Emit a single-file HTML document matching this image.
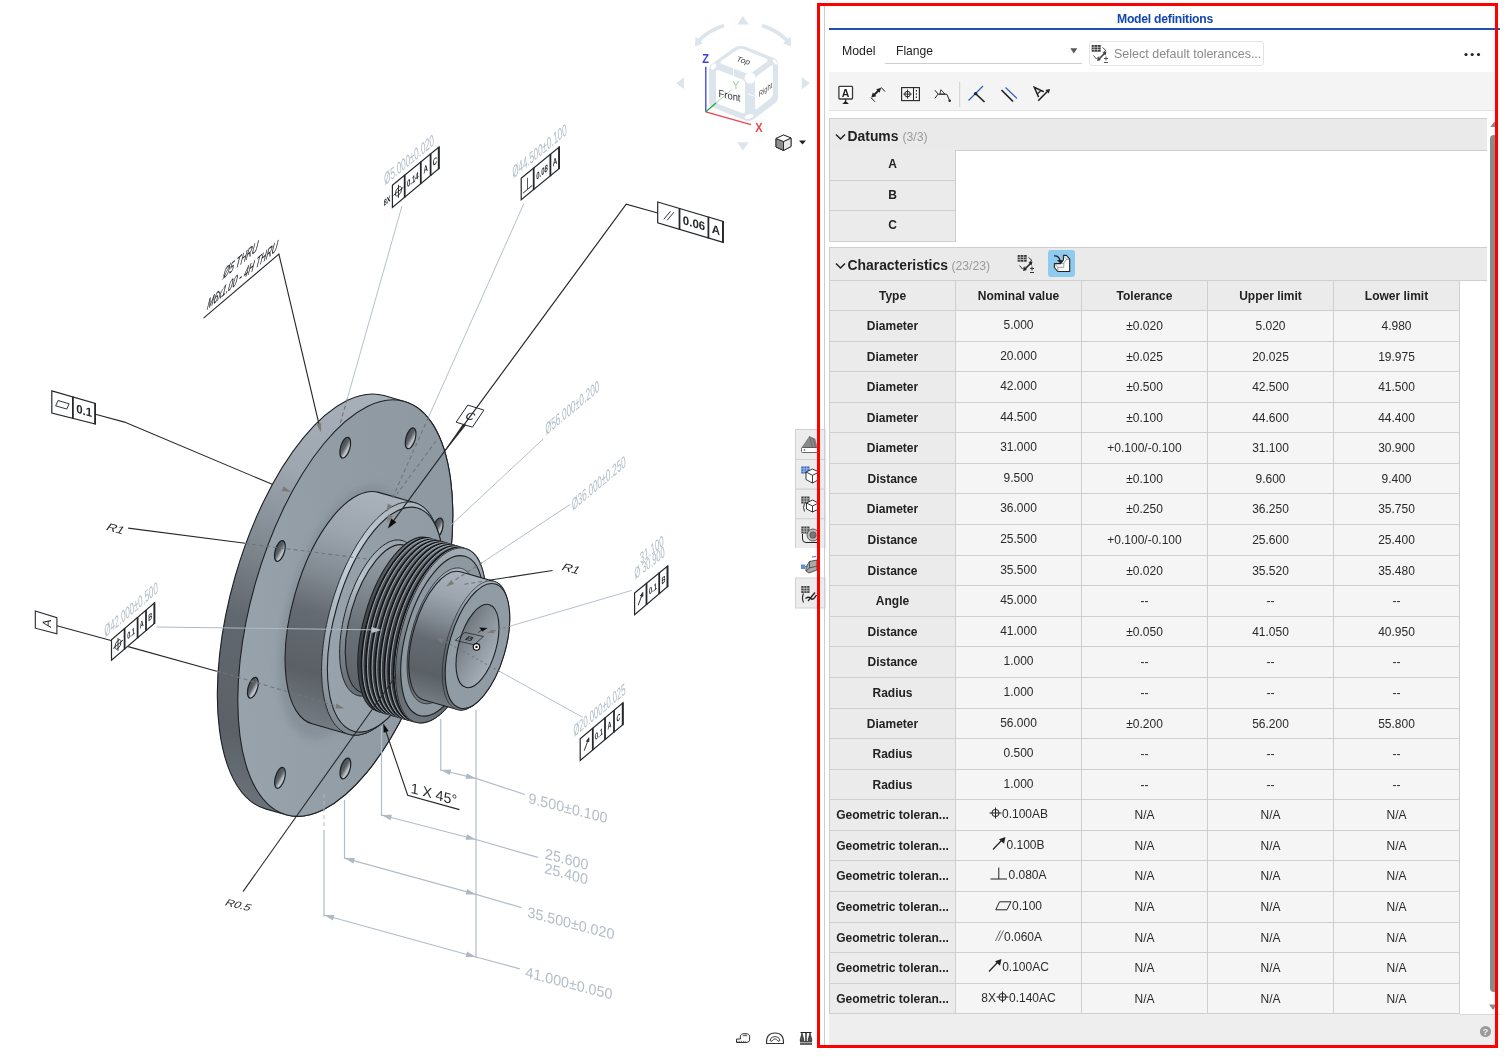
<!DOCTYPE html>
<html lang="en"><head><meta charset="utf-8"><title>Model definitions - Flange</title>
<style>
*{box-sizing:border-box;margin:0;padding:0}
html,body{width:1507px;height:1057px;overflow:hidden;background:#fff;font-family:"Liberation Sans",sans-serif;color:#222}
#stage{position:absolute;left:0;top:0;width:1507px;height:1057px;overflow:hidden;will-change:transform}
#gfx{position:absolute;left:0;top:0}
.abs{position:absolute}
#panel-left{position:absolute;left:824px;top:3px;width:1px;height:1045px;background:#c9cdd0}
#title{position:absolute;left:829.5px;top:9.5px;width:671px;height:19px;text-align:center;font-weight:bold;font-size:12.2px;line-height:19px;color:#1246b0;letter-spacing:-0.25px}
#titleline{position:absolute;left:829px;top:28px;width:671px;height:2px;background:#1c51b3}
.lbl{position:absolute;font-size:12.3px;line-height:16px;color:#222}
#modelsel{position:absolute;left:885px;top:40px;width:197px;height:24px;border-bottom:1px solid #cfcfcf}
#tolbtn{position:absolute;left:1089px;top:41px;width:175px;height:25px;border:1px solid #e3e3e3;border-radius:3px;background:#fff}
#tolbtn span{position:absolute;left:24px;top:4px;font-size:12.5px;line-height:16px;color:#8a8a8a;white-space:nowrap}
#toolbar{position:absolute;left:829px;top:72px;width:666px;height:39px;background:#f4f4f4;border-bottom:1px solid #e2e2e2}
.sec{position:absolute;left:829px;width:658px;background:#eaeaea;border:1px solid #cfcfcf;border-right:none}
.sec b{position:absolute;left:17.5px;font-size:13.9px;line-height:18px;color:#222;white-space:nowrap}
.sec i{position:absolute;font-style:normal;font-size:12.2px;line-height:16px;color:#9a9a9a}
.dat{position:absolute;left:829px;width:127px;height:31px;background:#ebebeb;border:1px solid #cfcfcf;border-top:none;text-align:center;font-weight:bold;font-size:12px;line-height:29px}
.tbl{position:absolute;left:829px;top:280px;width:631px;border-left:1px solid #cfcfcf}
.tr{display:flex;height:30.58px}
.tr.th{height:31px}
.td{width:126px;flex:none;border-right:1px solid #cfcfcf;border-bottom:1px solid #cfcfcf;background:#f5f5f5;text-align:center;font-size:12px;line-height:30px;white-space:nowrap;overflow:hidden;color:#2a2a2a}
.td.h{background:#ebebeb;font-weight:bold;color:#222}
.td.nv{line-height:28px}
.tr.th .td{border-top:1px solid #cfcfcf}
.gs{vertical-align:-1px;display:inline-block}
#footer{position:absolute;left:829px;top:1014px;width:666px;height:31px;background:#eeeeee}
#sbar{position:absolute;left:1490px;top:118px;width:8px;height:896px;background:#fff}
#sthumb{position:absolute;left:1490px;top:135px;width:8px;height:857px;background:#8a8a8a;border-radius:4px}
#redbox{position:absolute;left:816.6px;top:3.2px;width:681.6px;height:1045px;border:3px solid #ff0000;pointer-events:none}
.sbtn{position:absolute;left:795px;width:30px;height:30px;background:#ececec;border:1px solid #d4d4d4}
</style></head><body><div id="stage">
<svg id="gfx" width="830" height="1057" viewBox="0 0 830 1057" font-family="Liberation Sans, sans-serif">
<defs>
<linearGradient id="gs" x1="0" y1="0" x2="0" y2="1"><stop offset="0" stop-color="#aab3bc"/><stop offset="0.2" stop-color="#9ca5ae"/><stop offset="0.4" stop-color="#7f878f"/><stop offset="0.55" stop-color="#656b72"/><stop offset="0.8" stop-color="#5a6066"/><stop offset="1" stop-color="#747b82"/></linearGradient>
<linearGradient id="grim" x1="0" y1="0" x2="0" y2="1"><stop offset="0" stop-color="#a8b1ba"/><stop offset="0.22" stop-color="#9ea7b0"/><stop offset="0.42" stop-color="#7e868e"/><stop offset="0.58" stop-color="#62686f"/><stop offset="0.85" stop-color="#5b6167"/><stop offset="1" stop-color="#6b7279"/></linearGradient>
<linearGradient id="gthr" x1="0" y1="0" x2="0" y2="1"><stop offset="0" stop-color="#7d858c"/><stop offset="0.15" stop-color="#5d6368"/><stop offset="0.45" stop-color="#474b50"/><stop offset="0.8" stop-color="#383c40"/><stop offset="1" stop-color="#484c51"/></linearGradient>
<linearGradient id="gcham" x1="0" y1="0" x2="0" y2="1"><stop offset="0" stop-color="#a9b3bc"/><stop offset="0.3" stop-color="#c6d1da"/><stop offset="0.55" stop-color="#aab4bd"/><stop offset="1" stop-color="#7d858d"/></linearGradient>
<linearGradient id="gneck" x1="0" y1="0" x2="0" y2="1"><stop offset="0" stop-color="#9aa3ab"/><stop offset="0.3" stop-color="#848c94"/><stop offset="0.6" stop-color="#6a7178"/><stop offset="1" stop-color="#5d6369"/></linearGradient>
<linearGradient id="gface" x1="1" y1="0" x2="0" y2="1"><stop offset="0" stop-color="#8d97a0"/><stop offset="0.5" stop-color="#929ca5"/><stop offset="1" stop-color="#9ba5ae"/></linearGradient>
<linearGradient id="gbore" x1="0" y1="0" x2="1" y2="0.6"><stop offset="0" stop-color="#676e75"/><stop offset="0.45" stop-color="#848c94"/><stop offset="1" stop-color="#a5aeb7"/></linearGradient>
<linearGradient id="ghole" x1="0" y1="0.2" x2="1" y2="0.8"><stop offset="0" stop-color="#41464b"/><stop offset="0.45" stop-color="#5d6369"/><stop offset="0.75" stop-color="#c3cbd2"/><stop offset="1" stop-color="#70777e"/></linearGradient>
<linearGradient id="gs2" x1="0" y1="0" x2="0" y2="1"><stop offset="0" stop-color="#a3acb5"/><stop offset="0.3" stop-color="#939ca5"/><stop offset="0.55" stop-color="#7b838b"/><stop offset="0.8" stop-color="#60666c"/><stop offset="1" stop-color="#70777e"/></linearGradient>
<linearGradient id="gcham2" x1="0" y1="0" x2="0" y2="1"><stop offset="0" stop-color="#98a1aa"/><stop offset="0.3" stop-color="#b9c4cd"/><stop offset="0.55" stop-color="#8d969e"/><stop offset="1" stop-color="#666c73"/></linearGradient>
<linearGradient id="gface2" x1="1" y1="0" x2="0" y2="1"><stop offset="0" stop-color="#8f99a2"/><stop offset="0.5" stop-color="#949ea7"/><stop offset="1" stop-color="#9aa4ad"/></linearGradient>
<filter id="bl" x="-20%" y="-20%" width="140%" height="140%"><feGaussianBlur stdDeviation="3.5"/></filter>
</defs>
<g transform="translate(477.5 646.0) rotate(16.0)">
<path d="M-158.83 -215.00A93.31 215.00 0 0 0 -158.83 215.00L-137.52 215.00A93.31 215.00 0 0 0 -137.52 -215.00Z" fill="url(#grim)" stroke="#1d2124" stroke-width="1.1" />
<ellipse cx="-137.52" cy="0" rx="93.31" ry="215.00" fill="url(#gface)" stroke="#1d2124" stroke-width="1.1" />
<ellipse cx="-121.53" cy="-181.19" rx="4.67" ry="10.75" fill="url(#ghole)" stroke="#1d2124" stroke-width="1.2"/>
<ellipse cx="-70.61" cy="-102.05" rx="4.67" ry="10.75" fill="url(#ghole)" stroke="#1d2124" stroke-width="1.2"/>
<ellipse cx="-58.89" cy="36.86" rx="4.67" ry="10.75" fill="url(#ghole)" stroke="#1d2124" stroke-width="1.2"/>
<ellipse cx="-93.23" cy="154.19" rx="4.67" ry="10.75" fill="url(#ghole)" stroke="#1d2124" stroke-width="1.2"/>
<ellipse cx="-153.52" cy="181.19" rx="4.67" ry="10.75" fill="url(#ghole)" stroke="#1d2124" stroke-width="1.2"/>
<ellipse cx="-204.44" cy="102.05" rx="4.67" ry="10.75" fill="url(#ghole)" stroke="#1d2124" stroke-width="1.2"/>
<ellipse cx="-216.16" cy="-36.86" rx="4.67" ry="10.75" fill="url(#ghole)" stroke="#1d2124" stroke-width="1.2"/>
<ellipse cx="-181.82" cy="-154.19" rx="4.67" ry="10.75" fill="url(#ghole)" stroke="#1d2124" stroke-width="1.2"/>
<ellipse cx="-137.52" cy="4" rx="56.92" ry="131.15" fill="#7d868e" opacity="0.55" filter="url(#bl)"/>
<path d="M-137.52 -120.40A52.25 120.40 0 0 0 -137.52 120.40L-99.56 120.40A52.25 120.40 0 0 0 -99.56 -120.40Z" fill="url(#gs)" stroke="#1d2124" stroke-width="1.1" />
<path d="M-151.8 0.0L-151.8 -4.2L-151.7 -8.4L-151.5 -12.6L-151.3 -16.8L-151.0 -20.9L-150.7 -25.0L-150.3 -29.1L-149.8 -33.2L-149.3 -37.2L-148.7 -41.2L-148.0 -45.1L-147.3 -49.0L-146.5 -52.8L-145.7 -56.5L-144.8 -60.2L-143.9 -63.8L-142.9 -67.3L-141.8 -70.8L-140.7 -74.1L-139.6 -77.4L-138.4 -80.6L-137.2 -83.6L-135.9 -86.6L-134.5 -89.5L-133.2 -92.2L-131.7 -94.9L-130.3 -97.4L-128.8 -99.8L-127.2 -102.1L-125.7 -104.3L-124.1 -106.3L-122.5 -108.2L-120.8 -110.0L-119.1 -111.6L-117.4 -113.1L-115.7 -114.5L-114.0 -115.7L-112.2 -116.8L-110.4 -117.8L-108.6 -118.6L-106.8 -119.2L-105.0 -119.7L-103.2 -120.1L-101.4 -120.3L-99.6 -120.4L-97.7 -120.3L-95.9 -120.1L-94.1 -119.7L-92.3 -119.2L-90.5 -118.6L-88.7 -117.8L-86.9 -116.8L-85.2 -115.7L-83.4 -114.5L-81.7 -113.1L-80.0 -111.6L-78.3 -110.0L-76.7 -108.2L-75.0 -106.3L-72.0 -102.5L-70.5 -100.5L-69.0 -98.5L-67.5 -96.2L-66.1 -93.9L-64.7 -91.5L-63.3 -88.9L-62.0 -86.3L-60.7 -83.5L-59.4 -80.7L-58.2 -77.7L-57.1 -74.6L-56.0 -71.5L-54.9 -68.2L-53.9 -64.9L-53.0 -61.5L-52.0 -58.0L-51.2 -54.5L-50.4 -50.9L-49.6 -47.2L-49.0 -43.5L-48.3 -39.7L-47.8 -35.9L-47.2 -32.0L-46.8 -28.1L-46.4 -24.1L-46.1 -20.2L-45.8 -16.2L-45.6 -12.1L-45.4 -8.1L-45.3 -4.0L-45.3 0.0L-45.3 4.0L-45.4 8.1L-45.6 12.1L-45.8 16.2L-46.1 20.2L-46.4 24.1L-46.8 28.1L-47.2 32.0L-47.8 35.9L-48.3 39.7L-49.0 43.5L-49.6 47.2L-50.4 50.9L-51.2 54.5L-52.0 58.0L-53.0 61.5L-53.9 64.9L-54.9 68.2L-56.0 71.5L-57.1 74.6L-58.2 77.7L-59.4 80.7L-60.7 83.5L-62.0 86.3L-63.3 88.9L-64.7 91.5L-66.1 93.9L-67.5 96.2L-69.0 98.5L-70.5 100.5L-72.0 102.5L-75.0 106.3L-76.7 108.2L-78.3 110.0L-80.0 111.6L-81.7 113.1L-83.4 114.5L-85.2 115.7L-86.9 116.8L-88.7 117.8L-90.5 118.6L-92.3 119.2L-94.1 119.7L-95.9 120.1L-97.7 120.3L-99.6 120.4L-101.4 120.3L-103.2 120.1L-105.0 119.7L-106.8 119.2L-108.6 118.6L-110.4 117.8L-112.2 116.8L-114.0 115.7L-115.7 114.5L-117.4 113.1L-119.1 111.6L-120.8 110.0L-122.5 108.2L-124.1 106.3L-125.7 104.3L-127.2 102.1L-128.8 99.8L-130.3 97.4L-131.7 94.9L-133.2 92.2L-134.5 89.5L-135.9 86.6L-137.2 83.6L-138.4 80.6L-139.6 77.4L-140.7 74.1L-141.8 70.8L-142.9 67.3L-143.9 63.8L-144.8 60.2L-145.7 56.5L-146.5 52.8L-147.3 49.0L-148.0 45.1L-148.7 41.2L-149.3 37.2L-149.8 33.2L-150.3 29.1L-150.7 25.0L-151.0 20.9L-151.3 16.8L-151.5 12.6L-151.7 8.4L-151.8 4.2Z" fill="url(#gcham)" stroke="#1d2124" stroke-width="0.8" />
<ellipse cx="-95.69" cy="0" rx="50.39" ry="116.10" fill="url(#gface2)" stroke="#1d2124" stroke-width="1.1" />
<path d="M-136.5 0.0L-136.5 -2.8L-136.4 -5.6L-136.3 -8.4L-136.2 -11.2L-136.0 -14.0L-135.7 -16.8L-135.4 -19.5L-135.1 -22.2L-134.8 -24.9L-134.4 -27.6L-133.9 -30.2L-133.5 -32.8L-132.9 -35.3L-132.4 -37.9L-131.8 -40.3L-131.2 -42.7L-130.5 -45.1L-129.8 -47.4L-129.1 -49.6L-128.3 -51.8L-127.5 -54.0L-126.7 -56.0L-125.8 -58.0L-124.9 -59.9L-124.0 -61.8L-123.0 -63.5L-122.1 -65.2L-121.1 -66.8L-120.0 -68.4L-119.0 -69.8L-117.9 -71.2L-116.8 -72.5L-115.7 -73.7L-114.6 -74.8L-113.5 -75.8L-112.3 -76.7L-111.1 -77.5L-110.0 -78.2L-108.8 -78.9L-107.6 -79.4L-106.4 -79.8L-105.2 -80.2L-103.9 -80.4L-102.7 -80.6L-101.5 -80.6L-100.3 -80.6L-99.1 -80.4L-97.8 -80.2L-96.6 -79.8L-95.4 -79.4L-94.2 -78.9L-93.0 -78.2L-91.8 -77.5L-90.7 -76.7L-89.5 -75.8L-88.4 -74.8L-87.3 -73.7L-86.2 -72.5L-83.0 -69.0L-82.0 -67.8L-81.0 -66.5L-80.0 -65.1L-79.0 -63.6L-78.0 -62.1L-77.1 -60.5L-76.2 -58.8L-75.3 -57.0L-74.5 -55.2L-73.7 -53.3L-72.9 -51.4L-72.1 -49.3L-71.4 -47.3L-70.7 -45.1L-70.0 -42.9L-69.4 -40.7L-68.8 -38.4L-68.2 -36.0L-67.7 -33.6L-67.2 -31.2L-66.7 -28.8L-66.3 -26.2L-65.9 -23.7L-65.6 -21.2L-65.3 -18.6L-65.0 -16.0L-64.8 -13.3L-64.6 -10.7L-64.5 -8.0L-64.4 -5.3L-64.3 -2.7L-64.3 0.0L-64.3 2.7L-64.4 5.3L-64.5 8.0L-64.6 10.7L-64.8 13.3L-65.0 16.0L-65.3 18.6L-65.6 21.2L-65.9 23.7L-66.3 26.2L-66.7 28.8L-67.2 31.2L-67.7 33.6L-68.2 36.0L-68.8 38.4L-69.4 40.7L-70.0 42.9L-70.7 45.1L-71.4 47.3L-72.1 49.3L-72.9 51.4L-73.7 53.3L-74.5 55.2L-75.3 57.0L-76.2 58.8L-77.1 60.5L-78.0 62.1L-79.0 63.6L-80.0 65.1L-81.0 66.5L-82.0 67.8L-83.0 69.0L-86.2 72.5L-87.3 73.7L-88.4 74.8L-89.5 75.8L-90.7 76.7L-91.8 77.5L-93.0 78.2L-94.2 78.9L-95.4 79.4L-96.6 79.8L-97.8 80.2L-99.1 80.4L-100.3 80.6L-101.5 80.6L-102.7 80.6L-103.9 80.4L-105.2 80.2L-106.4 79.8L-107.6 79.4L-108.8 78.9L-110.0 78.2L-111.1 77.5L-112.3 76.7L-113.5 75.8L-114.6 74.8L-115.7 73.7L-116.8 72.5L-117.9 71.2L-119.0 69.8L-120.0 68.4L-121.1 66.8L-122.1 65.2L-123.0 63.5L-124.0 61.8L-124.9 59.9L-125.8 58.0L-126.7 56.0L-127.5 54.0L-128.3 51.8L-129.1 49.6L-129.8 47.4L-130.5 45.1L-131.2 42.7L-131.8 40.3L-132.4 37.9L-132.9 35.3L-133.5 32.8L-133.9 30.2L-134.4 27.6L-134.8 24.9L-135.1 22.2L-135.4 19.5L-135.7 16.8L-136.0 14.0L-136.2 11.2L-136.3 8.4L-136.4 5.6L-136.5 2.8Z" fill="url(#gcham2)" stroke="#1d2124" stroke-width="0.9" />
<path d="M-97.62 -76.76A33.31 76.76 0 0 0 -97.62 76.76L-77.48 76.76A33.31 76.76 0 0 0 -77.48 -76.76Z" fill="url(#gneck)" stroke="#1d2124" stroke-width="1.1" />
<path d="M-77.48 -90.30A39.19 90.30 0 0 0 -77.48 90.30L-38.35 90.30A39.19 90.30 0 0 0 -38.35 -90.30Z" fill="url(#gthr)" stroke="#1d2124" stroke-width="1.1" />
<path d="M-73.60 -90.30A39.19 90.30 0 0 0 -73.60 90.30" fill="none" stroke="#14171a" stroke-width="1.7" />
<path d="M-72.21 -90.30A39.19 90.30 0 0 0 -72.21 90.30" fill="none" stroke="#9fa9b2" stroke-width="0.9" />
<path d="M-68.82 -90.30A39.19 90.30 0 0 0 -68.82 90.30" fill="none" stroke="#14171a" stroke-width="1.7" />
<path d="M-67.43 -90.30A39.19 90.30 0 0 0 -67.43 90.30" fill="none" stroke="#9fa9b2" stroke-width="0.9" />
<path d="M-64.04 -90.30A39.19 90.30 0 0 0 -64.04 90.30" fill="none" stroke="#14171a" stroke-width="1.7" />
<path d="M-62.64 -90.30A39.19 90.30 0 0 0 -62.64 90.30" fill="none" stroke="#9fa9b2" stroke-width="0.9" />
<path d="M-59.25 -90.30A39.19 90.30 0 0 0 -59.25 90.30" fill="none" stroke="#14171a" stroke-width="1.7" />
<path d="M-57.86 -90.30A39.19 90.30 0 0 0 -57.86 90.30" fill="none" stroke="#9fa9b2" stroke-width="0.9" />
<path d="M-54.47 -90.30A39.19 90.30 0 0 0 -54.47 90.30" fill="none" stroke="#14171a" stroke-width="1.7" />
<path d="M-53.07 -90.30A39.19 90.30 0 0 0 -53.07 90.30" fill="none" stroke="#9fa9b2" stroke-width="0.9" />
<path d="M-49.68 -90.30A39.19 90.30 0 0 0 -49.68 90.30" fill="none" stroke="#14171a" stroke-width="1.7" />
<path d="M-48.29 -90.30A39.19 90.30 0 0 0 -48.29 90.30" fill="none" stroke="#9fa9b2" stroke-width="0.9" />
<path d="M-44.90 -90.30A39.19 90.30 0 0 0 -44.90 90.30" fill="none" stroke="#14171a" stroke-width="1.7" />
<path d="M-43.50 -90.30A39.19 90.30 0 0 0 -43.50 90.30" fill="none" stroke="#9fa9b2" stroke-width="0.9" />
<path d="M-40.11 -90.30A39.19 90.30 0 0 0 -40.11 90.30" fill="none" stroke="#14171a" stroke-width="1.7" />
<path d="M-38.72 -90.30A39.19 90.30 0 0 0 -38.72 90.30" fill="none" stroke="#9fa9b2" stroke-width="0.9" />
<path d="M-77.5 0.0L-77.5 -3.1L-77.5 -6.3L-77.3 -9.4L-77.2 -12.6L-77.0 -15.7L-76.7 -18.8L-76.4 -21.9L-76.0 -24.9L-75.6 -27.9L-75.2 -30.9L-74.7 -33.8L-74.2 -36.7L-73.6 -39.6L-73.0 -42.4L-72.3 -45.1L-71.6 -47.9L-70.8 -50.5L-70.1 -53.1L-69.2 -55.6L-68.4 -58.0L-67.5 -60.4L-66.5 -62.7L-65.6 -65.0L-64.6 -67.1L-63.5 -69.2L-62.5 -71.2L-61.4 -73.0L-60.3 -74.9L-59.1 -76.6L-58.0 -78.2L-56.8 -79.7L-55.5 -81.2L-54.3 -82.5L-53.0 -83.7L-51.8 -84.8L-50.5 -85.9L-49.1 -86.8L-47.8 -87.6L-46.5 -88.3L-45.2 -88.9L-43.8 -89.4L-42.5 -89.8L-41.1 -90.1L-39.7 -90.2L-38.4 -90.3L-37.0 -90.2L-35.6 -90.1L-34.3 -89.8L-32.9 -89.4L-31.6 -88.9L-30.2 -88.3L-28.9 -87.6L-27.6 -86.8L-26.2 -85.9L-24.9 -84.8L-23.7 -83.7L-22.4 -82.5L-21.2 -81.2L-19.9 -79.7L-18.8 -78.2L-17.6 -76.6L-16.4 -74.9L-15.3 -73.0L-14.2 -71.2L-13.2 -69.2L-12.1 -67.1L-11.1 -65.0L-10.2 -62.7L-9.2 -60.4L-8.3 -58.0L-7.5 -55.6L-6.7 -53.1L-5.9 -50.5L-5.1 -47.9L-4.4 -45.1L-3.8 -42.4L-3.1 -39.6L-2.5 -36.7L-2.0 -33.8L-1.5 -30.9L-1.1 -27.9L-0.7 -24.9L-0.3 -21.9L-0.0 -18.8L0.2 -15.7L0.5 -12.6L0.6 -9.4L0.7 -6.3L0.8 -3.1L0.8 0.0L0.8 3.1L0.7 6.3L0.6 9.4L0.5 12.6L0.2 15.7L-0.0 18.8L-0.3 21.9L-0.7 24.9L-1.1 27.9L-1.5 30.9L-2.0 33.8L-2.5 36.7L-3.1 39.6L-3.8 42.4L-4.4 45.1L-5.1 47.9L-5.9 50.5L-6.7 53.1L-7.5 55.6L-8.3 58.0L-9.2 60.4L-10.2 62.7L-11.1 65.0L-12.1 67.1L-13.2 69.2L-14.2 71.2L-15.3 73.0L-16.4 74.9L-17.6 76.6L-18.8 78.2L-19.9 79.7L-21.2 81.2L-22.4 82.5L-23.7 83.7L-24.9 84.8L-26.2 85.9L-27.6 86.8L-28.9 87.6L-30.2 88.3L-31.6 88.9L-32.9 89.4L-34.3 89.8L-35.6 90.1L-37.0 90.2L-38.4 90.3L-39.7 90.2L-41.1 90.1L-42.5 89.8L-43.8 89.4L-45.2 88.9L-46.5 88.3L-47.8 87.6L-49.1 86.8L-50.5 85.9L-51.8 84.8L-53.0 83.7L-54.3 82.5L-55.5 81.2L-56.8 79.7L-58.0 78.2L-59.1 76.6L-60.3 74.9L-61.4 73.0L-62.5 71.2L-63.5 69.2L-64.6 67.1L-65.6 65.0L-66.5 62.7L-67.5 60.4L-68.4 58.0L-69.2 55.6L-70.1 53.1L-70.8 50.5L-71.6 47.9L-72.3 45.1L-73.0 42.4L-73.6 39.6L-74.2 36.7L-74.7 33.8L-75.2 30.9L-75.6 27.9L-76.0 24.9L-76.4 21.9L-76.7 18.8L-77.0 15.7L-77.2 12.6L-77.3 9.4L-77.5 6.3L-77.5 3.1Z" fill="url(#gs2)" stroke="#1d2124" stroke-width="0.8" />
<ellipse cx="-36.80" cy="0" rx="35.92" ry="82.77" fill="#8e98a1" stroke="#1d2124" stroke-width="1.1" />
<path d="M-67.2 0.0L-67.2 -2.5L-67.2 -4.9L-67.0 -7.3L-66.9 -9.8L-66.8 -12.2L-66.6 -14.6L-66.3 -17.0L-66.0 -19.3L-65.7 -21.7L-65.4 -24.0L-65.0 -26.3L-64.6 -28.5L-64.1 -30.7L-63.7 -32.9L-63.1 -35.0L-62.6 -37.1L-62.0 -39.2L-61.4 -41.2L-60.8 -43.1L-60.1 -45.0L-59.4 -46.9L-58.7 -48.7L-57.9 -50.4L-57.2 -52.1L-56.4 -53.7L-55.5 -55.2L-54.7 -56.7L-53.8 -58.1L-52.9 -59.4L-52.0 -60.7L-51.1 -61.9L-50.1 -63.0L-49.2 -64.0L-48.2 -65.0L-47.2 -65.9L-46.2 -66.7L-45.2 -67.4L-44.2 -68.0L-43.1 -68.6L-42.1 -69.0L-41.0 -69.4L-40.0 -69.7L-38.9 -69.9L-37.9 -70.0L-36.8 -70.1L-35.7 -70.0L-34.7 -69.9L-33.6 -69.7L-32.6 -69.4L-31.5 -69.0L-30.5 -68.6L-29.4 -68.0L-28.4 -67.4L-27.4 -66.7L-26.4 -65.9L-25.4 -65.0L-24.4 -64.0L-23.5 -63.0L-22.5 -61.9L-20.1 -58.9L-19.2 -57.7L-18.4 -56.5L-17.5 -55.3L-16.7 -53.9L-15.9 -52.5L-15.1 -51.1L-14.3 -49.5L-13.6 -47.9L-12.9 -46.3L-12.2 -44.6L-11.5 -42.8L-10.9 -41.0L-10.3 -39.2L-9.7 -37.3L-9.2 -35.3L-8.7 -33.3L-8.2 -31.3L-7.7 -29.2L-7.3 -27.1L-6.9 -25.0L-6.5 -22.8L-6.2 -20.6L-5.9 -18.4L-5.6 -16.1L-5.4 -13.9L-5.2 -11.6L-5.1 -9.3L-4.9 -7.0L-4.8 -4.7L-4.8 -2.3L-4.8 0.0L-4.8 2.3L-4.8 4.7L-4.9 7.0L-5.1 9.3L-5.2 11.6L-5.4 13.9L-5.6 16.1L-5.9 18.4L-6.2 20.6L-6.5 22.8L-6.9 25.0L-7.3 27.1L-7.7 29.2L-8.2 31.3L-8.7 33.3L-9.2 35.3L-9.7 37.3L-10.3 39.2L-10.9 41.0L-11.5 42.8L-12.2 44.6L-12.9 46.3L-13.6 47.9L-14.3 49.5L-15.1 51.1L-15.9 52.5L-16.7 53.9L-17.5 55.3L-18.4 56.5L-19.2 57.7L-20.1 58.9L-22.5 61.9L-23.5 63.0L-24.4 64.0L-25.4 65.0L-26.4 65.9L-27.4 66.7L-28.4 67.4L-29.4 68.0L-30.5 68.6L-31.5 69.0L-32.6 69.4L-33.6 69.7L-34.7 69.9L-35.7 70.0L-36.8 70.1L-37.9 70.0L-38.9 69.9L-40.0 69.7L-41.0 69.4L-42.1 69.0L-43.1 68.6L-44.2 68.0L-45.2 67.4L-46.2 66.7L-47.2 65.9L-48.2 65.0L-49.2 64.0L-50.1 63.0L-51.1 61.9L-52.0 60.7L-52.9 59.4L-53.8 58.1L-54.7 56.7L-55.5 55.2L-56.4 53.7L-57.2 52.1L-57.9 50.4L-58.7 48.7L-59.4 46.9L-60.1 45.0L-60.8 43.1L-61.4 41.2L-62.0 39.2L-62.6 37.1L-63.1 35.0L-63.7 32.9L-64.1 30.7L-64.6 28.5L-65.0 26.3L-65.4 24.0L-65.7 21.7L-66.0 19.3L-66.3 17.0L-66.6 14.6L-66.8 12.2L-66.9 9.8L-67.0 7.3L-67.2 4.9L-67.2 2.5Z" fill="url(#gs)" stroke="#1d2124" stroke-width="0.7" />
<path d="M-36.80 -66.65A28.93 66.65 0 0 0 -36.80 66.65L-1.94 66.65A28.93 66.65 0 0 0 -1.94 -66.65Z" fill="url(#gs)" stroke="#1d2124" stroke-width="1.1" />
<path d="M-30.9 0.0L-30.9 -2.3L-30.8 -4.7L-30.7 -7.0L-30.6 -9.3L-30.4 -11.6L-30.2 -13.9L-30.0 -16.1L-29.7 -18.4L-29.4 -20.6L-29.1 -22.8L-28.8 -25.0L-28.4 -27.1L-27.9 -29.2L-27.5 -31.3L-27.0 -33.3L-26.5 -35.3L-25.9 -37.3L-25.3 -39.2L-24.7 -41.0L-24.1 -42.8L-23.4 -44.6L-22.7 -46.3L-22.0 -47.9L-21.3 -49.5L-20.5 -51.1L-19.8 -52.5L-18.9 -53.9L-18.1 -55.3L-17.3 -56.5L-16.4 -57.7L-15.5 -58.9L-14.6 -59.9L-13.7 -60.9L-12.8 -61.8L-11.8 -62.6L-10.9 -63.4L-9.9 -64.1L-8.9 -64.7L-8.0 -65.2L-7.0 -65.6L-6.0 -66.0L-5.0 -66.3L-4.0 -66.5L-3.0 -66.6L-1.9 -66.7L-0.9 -66.6L0.1 -66.5L1.1 -66.3L2.1 -66.0L3.1 -65.6L4.1 -65.2L5.1 -64.7L6.0 -64.1L7.0 -63.4L8.0 -62.6L8.9 -61.8L9.8 -60.9L10.7 -59.9L11.6 -58.9L13.1 -57.0L14.0 -55.9L14.8 -54.7L15.7 -53.5L16.4 -52.2L17.2 -50.8L18.0 -49.4L18.7 -47.9L19.4 -46.4L20.1 -44.8L20.8 -43.2L21.4 -41.5L22.1 -39.7L22.6 -37.9L23.2 -36.1L23.7 -34.2L24.2 -32.2L24.7 -30.3L25.2 -28.3L25.6 -26.2L25.9 -24.2L26.3 -22.1L26.6 -19.9L26.9 -17.8L27.2 -15.6L27.4 -13.4L27.6 -11.2L27.7 -9.0L27.8 -6.7L27.9 -4.5L28.0 -2.2L28.0 0.0L28.0 2.2L27.9 4.5L27.8 6.7L27.7 9.0L27.6 11.2L27.4 13.4L27.2 15.6L26.9 17.8L26.6 19.9L26.3 22.1L25.9 24.2L25.6 26.2L25.2 28.3L24.7 30.3L24.2 32.2L23.7 34.2L23.2 36.1L22.6 37.9L22.1 39.7L21.4 41.5L20.8 43.2L20.1 44.8L19.4 46.4L18.7 47.9L18.0 49.4L17.2 50.8L16.4 52.2L15.7 53.5L14.8 54.7L14.0 55.9L13.1 57.0L11.6 58.9L10.7 59.9L9.8 60.9L8.9 61.8L8.0 62.6L7.0 63.4L6.0 64.1L5.1 64.7L4.1 65.2L3.1 65.6L2.1 66.0L1.1 66.3L0.1 66.5L-0.9 66.6L-1.9 66.7L-3.0 66.6L-4.0 66.5L-5.0 66.3L-6.0 66.0L-7.0 65.6L-8.0 65.2L-8.9 64.7L-9.9 64.1L-10.9 63.4L-11.8 62.6L-12.8 61.8L-13.7 60.9L-14.6 59.9L-15.5 58.9L-16.4 57.7L-17.3 56.5L-18.1 55.3L-18.9 53.9L-19.8 52.5L-20.5 51.1L-21.3 49.5L-22.0 47.9L-22.7 46.3L-23.4 44.6L-24.1 42.8L-24.7 41.0L-25.3 39.2L-25.9 37.3L-26.5 35.3L-27.0 33.3L-27.5 31.3L-27.9 29.2L-28.4 27.1L-28.8 25.0L-29.1 22.8L-29.4 20.6L-29.7 18.4L-30.0 16.1L-30.2 13.9L-30.4 11.6L-30.6 9.3L-30.7 7.0L-30.8 4.7L-30.9 2.3Z" fill="url(#gs)" stroke="#1d2124" stroke-width="0.6" />
<ellipse cx="0.00" cy="0" rx="27.99" ry="64.50" fill="#919ba4" stroke="#1d2124" stroke-width="1.1" />
<ellipse cx="0.00" cy="0" rx="18.66" ry="43.00" fill="url(#gbore)" stroke="#1d2124" stroke-width="1.1" />
</g>
<path d="M401.9 206.2L347.2 399.0" fill="none" stroke="#adb9c4" stroke-width="0.9" />
<path d="M524.0 203.4L428.4 417.4" fill="none" stroke="#adb9c4" stroke-width="0.9" />
<path d="M543.3 438.9L450.6 525.5" fill="none" stroke="#adb9c4" stroke-width="0.9" />
<path d="M570.3 504.3L482.4 562.5" fill="none" stroke="#adb9c4" stroke-width="0.9" />
<path d="M632.0 590.3L510.2 626.1" fill="none" stroke="#adb9c4" stroke-width="0.9" />
<path d="M582.7 717.3L500.0 671.6" fill="none" stroke="#adb9c4" stroke-width="0.9" />
<path d="M156.5 627.0L372.0 629.8" fill="none" stroke="#adb9c4" stroke-width="1.0" />
<path d="M381.5 630.0L371.5 632.9L371.5 626.9Z" fill="#b8c2cc"/>
<path d="M476.0 710.0L476.0 958.0" fill="none" stroke="#b2bdc8" stroke-width="1.2" />
<path d="M440.8 719.0L440.8 771.0" fill="none" stroke="#b2bdc8" stroke-width="1.2" />
<path d="M381.5 726.0L381.5 816.0" fill="none" stroke="#b2bdc8" stroke-width="1.2" />
<path d="M344.5 800.0L344.5 859.0" fill="none" stroke="#b2bdc8" stroke-width="1.2" />
<path d="M324.0 830.0L324.0 916.7" fill="none" stroke="#b2bdc8" stroke-width="1.2" />
<path d="M324.0 794.0L324.0 828.0" fill="none" stroke="#adb9c4" stroke-width="0.9" stroke-dasharray="4 3"/>
<path d="M440.8 770.0L476.0 778.4L525.0 794.5" fill="none" stroke="#b2bdc8" stroke-width="1.2" />
<path d="M440.8 770.0L451.2 769.6L449.9 775.0Z" fill="#adb9c4"/>
<path d="M476.0 778.4L465.6 778.8L466.9 773.4Z" fill="#adb9c4"/>
<path d="M381.5 815.0L476.0 839.5L537.8 857.4" fill="none" stroke="#b2bdc8" stroke-width="1.2" />
<path d="M381.5 815.0L391.9 814.8L390.5 820.2Z" fill="#adb9c4"/>
<path d="M476.0 839.5L465.6 839.7L467.0 834.3Z" fill="#adb9c4"/>
<path d="M344.5 858.1L476.0 894.4L521.6 907.7" fill="none" stroke="#b2bdc8" stroke-width="1.2" />
<path d="M344.5 858.1L354.9 858.1L353.4 863.5Z" fill="#adb9c4"/>
<path d="M476.0 894.4L465.6 894.4L467.1 889.0Z" fill="#adb9c4"/>
<path d="M324.0 915.0L476.0 957.0L519.8 968.8" fill="none" stroke="#b2bdc8" stroke-width="1.2" />
<path d="M324.0 915.0L334.4 915.0L332.9 920.4Z" fill="#adb9c4"/>
<path d="M476.0 957.0L465.6 957.0L467.1 951.6Z" fill="#adb9c4"/>
<path d="M203.5 318.1L278.9 254.1L319.2 425.0" fill="none" stroke="#26292c" stroke-width="1.1" />
<path d="M320.9 432.4L316.5 424.2L321.2 423.1Z" fill="#7b7b78"/>
<path d="M95.4 414.2L124.5 422.1L272.2 484.3" fill="none" stroke="#26292c" stroke-width="1.1" />
<path d="M291.0 492.0L281.7 491.0L283.7 486.2Z" fill="#7b7b78"/>
<path d="M128.2 528.1L245.1 543.3" fill="none" stroke="#26292c" stroke-width="1.1" />
<path d="M56.9 625.7L111.0 640.5" fill="none" stroke="#26292c" stroke-width="1.1" />
<path d="M128.2 646.6L216.8 671.2" fill="none" stroke="#26292c" stroke-width="1.1" />
<path d="M657.7 213.0L626.2 204.2L392.0 522.8" fill="none" stroke="#26292c" stroke-width="1.2" />
<path d="M387.9 528.4L391.2 518.4L396.4 522.2Z" fill="#0c0c0c"/>
<path d="M463.2 424L465.8 425L443.6 452.8Z" fill="#26292c" stroke="#26292c" stroke-width="0.5"/>
<path d="M552.5 570.5L489.0 580.3" fill="none" stroke="#26292c" stroke-width="1.1" />
<path d="M459.5 809.6L407.7 795.3L385.3 729.5" fill="none" stroke="#26292c" stroke-width="1.1" />
<path d="M383.3 723.4L388.7 731.1L383.7 732.8Z" fill="#0c0c0c"/>
<path d="M243.0 891.6L395.9 676.0" fill="none" stroke="#26292c" stroke-width="1.1" />
<path d="M245.0 543.4L366.5 559.0" fill="none" stroke="#737577" stroke-width="1.1" stroke-dasharray="4 3"/>
<path d="M216.6 671.0L335.0 705.5" fill="none" stroke="#737577" stroke-width="1.1" stroke-dasharray="4 3"/>
<path d="M344.5 708.5L335.1 708.5L336.6 703.5Z" fill="#7b7b78"/>
<path d="M347.2 399.0L340.0 424.0" fill="none" stroke="#737577" stroke-width="1.1" stroke-dasharray="4 3"/>
<path d="M428.4 417.4L392.0 499.0" fill="none" stroke="#737577" stroke-width="1.1" stroke-dasharray="4 3"/>
<path d="M436.0 441.0L397.0 494.0" fill="none" stroke="#737577" stroke-width="1.1" stroke-dasharray="4 3"/>
<path d="M386.5 512.0L387.7 503.7L392.1 505.8Z" fill="#7b7b78"/>
<path d="M387.0 522.5L388.1 514.2L392.8 516.4Z" fill="#7b7b78"/>
<path d="M482.4 562.5L455.0 580.0" fill="none" stroke="#737577" stroke-width="1.1" stroke-dasharray="4 3"/>
<path d="M446.0 586.5L451.4 580.1L454.0 584.1Z" fill="#7b7b78"/>
<path d="M489.0 580.3L463.0 584.5" fill="none" stroke="#737577" stroke-width="1.1" stroke-dasharray="4 3"/>
<path d="M510.2 626.1L492.0 631.5" fill="none" stroke="#737577" stroke-width="1.1" stroke-dasharray="2 3"/>
<path d="M487.0 633.0L493.1 628.9L494.3 633.1Z" fill="#7b7b78"/>
<path d="M500.0 671.6L445.0 641.5" fill="none" stroke="#737577" stroke-width="1.1" stroke-dasharray="2 3"/>
<path d="M436.5 638.0L443.7 639.3L441.7 643.2Z" fill="#7b7b78"/>
<path d="M464.7 632.4L483.4 636.5L474 644.8L455.3 640.3Z" fill="none" stroke="#26292c" stroke-width="0.8"/>
<text transform="matrix(1.1692 0.2699 -0.6000 0.6000 469.5 638.6)" font-size="8.5" font-weight="bold" fill="#26292c" text-anchor="middle" dy="0.35em" >B</text>
<path d="M478.2 632.6L482.0 630.0" fill="none" stroke="#26292c" stroke-width="0.8" />
<path d="M479.2 627.6L487.6 628L482.3 631.4Z" fill="#111"/>
<circle cx="476.5" cy="646.9" r="3.2" fill="#fff" stroke="#111" stroke-width="1.2"/><circle cx="476.5" cy="646.9" r="1.2" fill="#111"/>
<path d="M392.4 185.3L439.0 147.0L439.0 168.5L392.4 207.5Z" fill="#fff" stroke="#26292c" stroke-width="1.2"/>
<path d="M404.7 174.8L404.7 197.6" fill="none" stroke="#26292c" stroke-width="1.7999999999999998" />
<path d="M420.8 161.6L420.8 184.1" fill="none" stroke="#26292c" stroke-width="1.7999999999999998" />
<path d="M430.6 153.5L430.6 175.9" fill="none" stroke="#26292c" stroke-width="1.7999999999999998" />
<path d="M438.7 146.8L438.7 169.2" fill="none" stroke="#26292c" stroke-width="1.7999999999999998" />
<g transform="matrix(0.7726 -0.6350 0 1 398.5 191.3)" fill="none" stroke="#26292c" stroke-width="0.9"><circle r="4"/><path d="M-6.5 0H6.5M0 -6.5V6.5"/></g>
<text transform="matrix(0.6026 -0.4953 0.0000 1.0000 412.8 179.5)" font-size="10" font-weight="bold" fill="#26292c" text-anchor="middle" dy="0.35em" >0.14</text>
<text transform="matrix(0.6026 -0.4953 0.0000 1.0000 425.7 168.8)" font-size="10" font-weight="bold" fill="#26292c" text-anchor="middle" dy="0.35em" >A</text>
<text transform="matrix(0.6026 -0.4953 0.0000 1.0000 434.8 161.2)" font-size="10" font-weight="bold" fill="#26292c" text-anchor="middle" dy="0.35em" >C</text>
<text transform="matrix(0.6026 -0.4953 0.0000 1.0000 390.4 197.9)" font-size="9.0" font-weight="bold" fill="#26292c" text-anchor="end" dy="0.35em" >8X</text>
<path d="M521.2 178.3L559.3 147.0L559.3 168.5L521.2 199.7Z" fill="#fff" stroke="#26292c" stroke-width="1.2"/>
<path d="M533.7 167.6L533.7 189.9" fill="none" stroke="#26292c" stroke-width="1.7999999999999998" />
<path d="M550.4 153.9L550.4 176.2" fill="none" stroke="#26292c" stroke-width="1.7999999999999998" />
<path d="M559.0 146.8L559.0 169.1" fill="none" stroke="#26292c" stroke-width="1.7999999999999998" />
<g transform="matrix(0.7727 -0.6348 0 1 527.5 183.9)" fill="none" stroke="#26292c" stroke-width="1"><path d="M-6 5.5H6M0 -6V5.5"/></g>
<text transform="matrix(0.6027 -0.4951 0.0000 1.0000 542.0 171.9)" font-size="10" font-weight="bold" fill="#26292c" text-anchor="middle" dy="0.35em" >0.08</text>
<text transform="matrix(0.6027 -0.4951 0.0000 1.0000 554.8 161.4)" font-size="10" font-weight="bold" fill="#26292c" text-anchor="middle" dy="0.35em" >A</text>
<path d="M657.7 202.0L723.2 221.5L723.2 242.4L657.7 222.9Z" fill="#fff" stroke="#26292c" stroke-width="1.2"/>
<path d="M679.5 208.1L679.5 229.8" fill="none" stroke="#26292c" stroke-width="1.7999999999999998" />
<path d="M708.4 216.7L708.4 238.4" fill="none" stroke="#26292c" stroke-width="1.7999999999999998" />
<path d="M722.9 221.0L722.9 242.7" fill="none" stroke="#26292c" stroke-width="1.7999999999999998" />
<g transform="matrix(0.9584 0.2853 0 1 668.6 215.7)" fill="none" stroke="#26292c" stroke-width="0.9"><path d="M-5 5L2 -5M-1.5 5L5.5 -5"/></g>
<text transform="matrix(0.9584 0.2853 0.0000 1.0000 694.0 223.2)" font-size="12" font-weight="bold" fill="#26292c" text-anchor="middle" dy="0.35em" >0.06</text>
<text transform="matrix(0.9584 0.2853 0.0000 1.0000 715.8 229.7)" font-size="12" font-weight="bold" fill="#26292c" text-anchor="middle" dy="0.35em" >A</text>
<path d="M51.8 390.8L95.4 403.5L95.4 424.0L51.8 413.0Z" fill="#fff" stroke="#26292c" stroke-width="1.2"/>
<path d="M72.9 396.5L72.9 418.7" fill="none" stroke="#26292c" stroke-width="1.7999999999999998" />
<path d="M95.1 403.0L95.1 424.3" fill="none" stroke="#26292c" stroke-width="1.7999999999999998" />
<g transform="matrix(0.9601 0.2797 0 1 62.4 404.8)" fill="none" stroke="#26292c" stroke-width="0.9"><path d="M-4.5 -3H7L4.5 3H-7Z"/></g>
<text transform="matrix(0.9601 0.2797 0.0000 1.0000 84.2 410.7)" font-size="12" font-weight="bold" fill="#26292c" text-anchor="middle" dy="0.35em" >0.1</text>
<path d="M111.5 639.8L154.6 602.9L154.6 623.3L111.5 660.2Z" fill="#fff" stroke="#26292c" stroke-width="1.2"/>
<path d="M124.6 628.2L124.6 649.4" fill="none" stroke="#26292c" stroke-width="1.7999999999999998" />
<path d="M137.6 617.1L137.6 638.3" fill="none" stroke="#26292c" stroke-width="1.7999999999999998" />
<path d="M146.0 609.9L146.0 631.1" fill="none" stroke="#26292c" stroke-width="1.7999999999999998" />
<path d="M154.3 602.8L154.3 624.0" fill="none" stroke="#26292c" stroke-width="1.7999999999999998" />
<g transform="matrix(0.7596 -0.6504 0 1 118.0 644.4)" fill="none" stroke="#26292c" stroke-width="0.9"><circle r="4"/><path d="M-6.5 0H6.5M0 -6.5V6.5"/></g>
<text transform="matrix(0.5697 -0.4878 0.0000 1.0000 131.1 633.2)" font-size="9.5" font-weight="bold" fill="#26292c" text-anchor="middle" dy="0.35em" >0.1</text>
<text transform="matrix(0.5697 -0.4878 0.0000 1.0000 141.8 624.1)" font-size="9.5" font-weight="bold" fill="#26292c" text-anchor="middle" dy="0.35em" >A</text>
<text transform="matrix(0.5697 -0.4878 0.0000 1.0000 150.3 616.8)" font-size="9.5" font-weight="bold" fill="#26292c" text-anchor="middle" dy="0.35em" >B</text>
<path d="M634.6 593.0L667.7 566.0L667.7 586.4L634.6 614.7Z" fill="#fff" stroke="#26292c" stroke-width="1.2"/>
<path d="M646.5 582.9L646.5 604.9" fill="none" stroke="#26292c" stroke-width="1.7999999999999998" />
<path d="M659.2 572.5L659.2 594.1" fill="none" stroke="#26292c" stroke-width="1.7999999999999998" />
<path d="M667.4 565.8L667.4 587.1" fill="none" stroke="#26292c" stroke-width="1.7999999999999998" />
<g transform="matrix(0.7749 -0.6321 0 1 640.5 598.9)" fill="none" stroke="#26292c" stroke-width="0.9"><path d="M-3 4.5L1.6 -2.2"/><path d="M3 -4.6L3 -0.8L0 -2.9Z" fill="#26292c"/></g>
<text transform="matrix(0.5812 -0.4741 0.0000 1.0000 652.9 588.6)" font-size="9.5" font-weight="bold" fill="#26292c" text-anchor="middle" dy="0.35em" >0.1</text>
<text transform="matrix(0.5812 -0.4741 0.0000 1.0000 663.5 579.8)" font-size="9.5" font-weight="bold" fill="#26292c" text-anchor="middle" dy="0.35em" >B</text>
<path d="M580.2 738.8L623.0 702.9L623.0 724.5L580.2 760.4Z" fill="#fff" stroke="#26292c" stroke-width="1.2"/>
<path d="M592.8 727.8L592.8 750.2" fill="none" stroke="#26292c" stroke-width="1.7999999999999998" />
<path d="M605.0 717.6L605.0 740.0" fill="none" stroke="#26292c" stroke-width="1.7999999999999998" />
<path d="M614.0 710.0L614.0 732.4" fill="none" stroke="#26292c" stroke-width="1.7999999999999998" />
<path d="M622.7 702.8L622.7 725.2" fill="none" stroke="#26292c" stroke-width="1.7999999999999998" />
<g transform="matrix(0.7662 -0.6426 0 1 586.5 744.3)" fill="none" stroke="#26292c" stroke-width="0.9"><path d="M-3 4.5L1.6 -2.2"/><path d="M3 -4.6L3 -0.8L0 -2.9Z" fill="#26292c"/></g>
<text transform="matrix(0.5746 -0.4820 0.0000 1.0000 598.9 733.9)" font-size="9.5" font-weight="bold" fill="#26292c" text-anchor="middle" dy="0.35em" >0.1</text>
<text transform="matrix(0.5746 -0.4820 0.0000 1.0000 609.5 725.0)" font-size="9.5" font-weight="bold" fill="#26292c" text-anchor="middle" dy="0.35em" >A</text>
<text transform="matrix(0.5746 -0.4820 0.0000 1.0000 618.5 717.5)" font-size="9.5" font-weight="bold" fill="#26292c" text-anchor="middle" dy="0.35em" >C</text>
<path d="M35.3 611L56.9 617.6L56.9 633.9L35.3 628.2Z" fill="#fff" stroke="#26292c" stroke-width="1.1"/>
<text transform="matrix(0.0000 -1.0000 1.0000 0.1800 46.4 623.2)" font-size="12" font-weight="normal" fill="#26292c" text-anchor="middle" dy="0.35em" >A</text>
<path d="M467.8 405.1L483.9 410.1L472.4 427.2L456.1 422.2Z" fill="none" stroke="#26292c" stroke-width="1"/>
<text transform="matrix(0.9563 0.2924 -0.5500 0.8000 470.4 416.2)" font-size="12" font-weight="normal" fill="#26292c" text-anchor="middle" dy="0.35em" >C</text>
<text transform="matrix(0.4907 -0.4031 0.1000 1.0000 384.8 185.5)" font-size="16" font-weight="normal" fill="#b0bcc7" text-anchor="start" dy="0" >Ø5.000±0.020</text>
<text transform="matrix(0.4907 -0.4031 0.1000 1.0000 513.0 178.5)" font-size="16" font-weight="normal" fill="#b0bcc7" text-anchor="start" dy="0" >Ø44.500±0.100</text>
<text transform="matrix(0.4864 -0.4082 0.1000 1.0000 546.0 435.5)" font-size="16" font-weight="normal" fill="#b0bcc7" text-anchor="start" dy="0" >Ø56.000±0.200</text>
<text transform="matrix(0.4864 -0.4082 0.1000 1.0000 572.5 511.0)" font-size="16" font-weight="normal" fill="#b0bcc7" text-anchor="start" dy="0" >Ø36.000±0.250</text>
<text transform="matrix(0.4829 -0.4124 0.1000 1.0000 105.0 637.5)" font-size="16" font-weight="normal" fill="#b0bcc7" text-anchor="start" dy="0" >Ø42.000±0.500</text>
<text transform="matrix(0.4864 -0.4082 0.1000 1.0000 574.0 737.0)" font-size="15.5" font-weight="normal" fill="#b0bcc7" text-anchor="start" dy="0" >Ø20.000±0.025</text>
<text transform="matrix(0.5129 -0.4154 0.1000 1.0000 640.5 564.0)" font-size="15" font-weight="normal" fill="#b0bcc7" text-anchor="start" dy="0" >31.100</text>
<text transform="matrix(0.4886 -0.3817 0.1000 1.0000 635.0 579.6)" font-size="15" font-weight="normal" fill="#b0bcc7" text-anchor="start" dy="0" >Ø 30.900</text>
<text transform="matrix(0.9493 0.2434 -0.1000 0.9900 528.0 803.0)" font-size="15" font-weight="normal" fill="#b3bec9" text-anchor="start" dy="0" >9.500±0.100</text>
<text transform="matrix(0.9465 0.2539 -0.1000 0.9900 544.5 858.5)" font-size="15" font-weight="normal" fill="#b3bec9" text-anchor="start" dy="0" >25.600</text>
<text transform="matrix(0.9465 0.2539 -0.1000 0.9900 544.0 873.0)" font-size="15" font-weight="normal" fill="#b3bec9" text-anchor="start" dy="0" >25.400</text>
<text transform="matrix(0.9482 0.2478 -0.1000 0.9900 527.0 917.0)" font-size="15" font-weight="normal" fill="#b3bec9" text-anchor="start" dy="0" >35.500±0.020</text>
<text transform="matrix(0.9482 0.2478 -0.1000 0.9900 525.0 977.0)" font-size="15" font-weight="normal" fill="#b3bec9" text-anchor="start" dy="0" >41.000±0.050</text>
<text transform="matrix(0.4630 -0.3816 -0.2400 0.9700 239.5 265.3)" font-size="17" font-weight="normal" fill="#26292c" text-anchor="middle" dy="0" stroke="#26292c" stroke-width="0.35">Ø5 THRU</text>
<text transform="matrix(0.4576 -0.3881 -0.2400 0.9700 241.3 280.4)" font-size="17" font-weight="normal" fill="#26292c" text-anchor="middle" dy="0" stroke="#26292c" stroke-width="0.35">M6x1.00 - 4H THRU</text>
<text transform="matrix(1.1158 0.2782 -0.5500 0.8000 113.5 532.0)" font-size="12" font-weight="normal" fill="#26292c" text-anchor="middle" dy="0" >R1</text>
<text transform="matrix(1.1158 0.2782 -0.5500 0.8000 569.0 572.0)" font-size="12" font-weight="normal" fill="#26292c" text-anchor="middle" dy="0" >R1</text>
<text transform="matrix(1.0673 0.2661 -0.5500 0.8000 236.5 908.0)" font-size="11" font-weight="normal" fill="#26292c" text-anchor="middle" dy="0" >R0.5</text>
<text transform="matrix(0.9636 0.2672 -0.0800 0.9900 433.5 799.0)" font-size="14.5" font-weight="normal" fill="#26292c" text-anchor="middle" dy="0" >1 X 45°</text>
<g fill="#dce4ec"><path d="M742.8 16.1L737.2 24.4H748.8Z"/><path d="M737.2 142.3H748.8L742.8 150.4Z"/><path d="M676.1 83.3L684.1 77.2V89.3Z"/><path d="M809.9 83.3L801.8 77.2V89.3Z"/></g>
<path d="M724 25.5Q707 31 697.5 42" fill="none" stroke="#dce4ec" stroke-width="3.8"/><path d="M694.8 46.5L695.5 36.5L703 43.5Z" fill="#dce4ec"/>
<path d="M762 25.5Q779 31 788.5 42" fill="none" stroke="#dce4ec" stroke-width="3.8"/><path d="M791.2 46.5L790.5 36.5L783 43.5Z" fill="#dce4ec"/>
<path d="M737 46.5Q741 45 745 46.5L774 58Q778 60 778 64V97Q778 101 775 103L754 119Q750 122 745.5 120.5L713 107.5Q709 106 709 102V70Q709 66 712.5 63.5L733 48.5Z" fill="#dce4ec"/>
<path d="M738 49.5Q741 48 744 49.5L766 58.5Q769 60 766.5 62L752 72.5Q749 74.5 745.5 73L722 64Q719 62.5 721.5 60.5Z" fill="#fff"/>
<path d="M716 72.5Q716 69 719.5 70.5L742.5 79.5Q745 80.5 745 83.5V111Q745 114.5 741.5 113L718.5 104Q716 103 716 100Z" fill="#fff"/>
<path d="M755 80Q755 77.5 757 76L770.5 66Q773 64 773 67.5V94Q773 96.5 771 98L757.5 108.5Q755 110.5 755 107Z" fill="#fff"/>
<circle cx="750" cy="78" r="5.5" fill="#fff"/><ellipse cx="713.5" cy="66.5" rx="2.2" ry="3.5" fill="#fff" transform="rotate(35 713.5 66.5)"/><ellipse cx="749" cy="116.5" rx="4.5" ry="2" fill="#fff" transform="rotate(-20 749 116.5)"/><ellipse cx="775" cy="62" rx="1.5" ry="3.2" fill="#fff" transform="rotate(-35 775 62)"/>
<path d="M733.5 67.5V77M748 94L757 97" stroke="#fff" stroke-width="0.9"/>
<path d="M705.8 111.8V66.7" stroke="#3a3fe0" stroke-width="1.3"/><path d="M705.8 111.8L750.9 124.6" stroke="#e8454a" stroke-width="1.3"/><path d="M705.8 111.8L716 103" stroke="#2ea33a" stroke-width="1.3"/><path d="M716 103L732 89.5" stroke="#a5dba8" stroke-width="1"/>
<text x="705.5" y="63" font-size="13" font-weight="bold" fill="#3a3fe0" text-anchor="middle" transform="translate(705.5 0) scale(0.85 1) translate(-705.5 0)">Z</text>
<text x="759" y="132.5" font-size="13" font-weight="bold" fill="#e8454a" text-anchor="middle" transform="translate(759 0) scale(0.85 1) translate(-759 0)">X</text>
<text x="736" y="88.5" font-size="11" fill="#9bd7a0" text-anchor="middle">Y</text>
<text transform="matrix(0.8964 0.2070 0.0000 1.0000 729.5 95.5)" font-size="10.5" font-weight="normal" fill="#333" text-anchor="middle" dy="0.35em" >Front</text>
<text transform="matrix(0.9613 0.2756 -0.4500 0.8000 743.5 60.5)" font-size="8.5" font-weight="normal" fill="#444" text-anchor="middle" dy="0.35em" >Top</text>
<text transform="matrix(0.7281 -0.5290 0.0000 1.0000 765.5 89.5)" font-size="8" font-weight="normal" fill="#444" text-anchor="middle" dy="0.35em" >Right</text>
<g stroke="#222" stroke-width="0.9" stroke-linejoin="round"><path d="M783.5 135L791 138V146.5L783.5 150.5L776 147V138.5Z" fill="#fff"/><path d="M776 138.5L783.5 141.5V150.5L776 147Z" fill="#8e8e8e"/><path d="M783.5 141.5L791 138V146.5L783.5 150.5Z" fill="#e8e8e8"/><path d="M776 138.5L783.5 135L791 138L783.5 141.5Z" fill="#fff"/></g>
<path d="M799 140.5H806L802.5 144.5Z" fill="#222"/>
<rect x="795.5" y="429.5" width="29.5" height="30.0" fill="#ececec" stroke="#d2d2d2" stroke-width="1"/>
<rect x="795.5" y="459.5" width="29.5" height="29.7" fill="#ececec" stroke="#d2d2d2" stroke-width="1"/>
<rect x="795.5" y="489.2" width="29.5" height="29.6" fill="#ececec" stroke="#d2d2d2" stroke-width="1"/>
<rect x="795.5" y="518.8" width="29.5" height="29.7" fill="#ececec" stroke="#d2d2d2" stroke-width="1"/>
<rect x="795.5" y="548.5" width="29.5" height="29.5" fill="#ffffff" stroke="#ffffff" stroke-width="1"/>
<rect x="795.5" y="578.0" width="29.5" height="30.0" fill="#ececec" stroke="#d2d2d2" stroke-width="1"/>
<g stroke-linejoin="round">
<path d="M802 447.5L809.5 436.5L815 439L817 447.5Z" fill="#8a8a8a" stroke="#666" stroke-width="0.6"/><path d="M809.5 436.5L812.5 447.5M813 437.8L815.5 447.5" stroke="#555" stroke-width="0.6"/><rect x="801.5" y="447.5" width="16" height="5" rx="1" fill="#fff" stroke="#444" stroke-width="0.8"/><circle cx="804.5" cy="450" r="0.8" fill="#444"/>
<path d="M801.3 466.5H809.5V473.5H801.3Z" fill="#2f66c8"/><path d="M801.3 468.8H809.5M801.3 471.2H809.5M804 466.5V473.5M806.8 466.5V473.5" stroke="#dbe6f7" stroke-width="0.6"/><path d="M806 472L812.5 469L819 472V479.5L812.5 483L806 479.5Z" fill="#fff" stroke="#222" stroke-width="0.9"/><path d="M806 472L812.5 475.3L819 472M812.5 475.3V483" fill="none" stroke="#222" stroke-width="0.9"/>
<path d="M801.3 496.5H809.5V503.5H801.3Z" fill="#444"/><path d="M801.3 498.8H809.5M801.3 501.2H809.5M804 496.5V503.5M806.8 496.5V503.5" stroke="#eee" stroke-width="0.6"/><path d="M806.5 503L812.5 500L818.5 503V509L812.5 512L806.5 509Z" fill="#fff" stroke="#222" stroke-width="0.9"/><path d="M806.5 503L812.5 506L818.5 503M812.5 506V512" fill="none" stroke="#222" stroke-width="0.9"/><path d="M804.5 503.5Q802.5 507.5 804.5 511.5" fill="none" stroke="#222" stroke-width="0.9"/>
<path d="M801.3 526.5H809.5V533.5H801.3Z" fill="#444"/><path d="M801.3 528.8H809.5M801.3 531.2H809.5M804 526.5V533.5M806.8 526.5V533.5" stroke="#eee" stroke-width="0.6"/><path d="M802.5 534V539Q802.5 542.5 806 542.5H819" fill="none" stroke="#222" stroke-width="1"/><circle cx="813" cy="535" r="6" fill="#bbb" stroke="#444" stroke-width="0.8"/><circle cx="813" cy="535" r="3.2" fill="#777" stroke="#444" stroke-width="0.6"/>
<path d="M806 567L809.5 561.5L817 560V570L809 573L806 571Z" fill="#aaa" stroke="#333" stroke-width="0.8"/><path d="M809.5 561.5V568L817 566M809.5 568L806 571" fill="none" stroke="#333" stroke-width="0.7"/><path d="M801 564.5H805V569H801Z" fill="#5e8ee0"/><path d="M805 566.5H808" stroke="#3b6fd0" stroke-width="0.8"/><path d="M812 557L816 556.5" stroke="#3b6fd0" stroke-width="1"/>
<path d="M801.3 586H809.5V593H801.3Z" fill="#444"/><path d="M801.3 588.3H809.5M801.3 590.7H809.5M804 586V593M806.8 586V593" stroke="#eee" stroke-width="0.6"/><path d="M803.5 593.5Q801.5 598 803.5 602.5" fill="none" stroke="#222" stroke-width="1.1"/><path d="M805.5 598.5Q809 596 811 598.5T816.5 595" fill="none" stroke="#222" stroke-width="1.4"/><path d="M808 601L815 592.5" stroke="#222" stroke-width="1.3"/>
</g>
<g fill="none" stroke="#333" stroke-width="1" stroke-linejoin="round"><ellipse cx="745" cy="1036.3" rx="4.6" ry="2.6" fill="#fff"/><ellipse cx="745" cy="1036.3" rx="2.2" ry="1.1" fill="#999" stroke-width="0.7"/><path d="M740.4 1036.3V1039H736.5V1042.5H746Q749.6 1042.5 749.6 1040V1036.3" fill="#fff"/><path d="M738 1040.8V1042.3M739.8 1040.8V1042.3M741.6 1040.8V1042.3M743.4 1040.8V1042.3M745.2 1040.8V1042.3" stroke-width="0.7"/></g>
<g fill="none" stroke="#333" stroke-width="1.1" stroke-linejoin="round"><path d="M766.5 1043.5Q766 1033 775 1033Q784 1033 783.5 1043.5Z" fill="#fff"/><path d="M770 1040.5Q770.5 1036.5 775 1036.5Q779.5 1036.5 780 1040.5L778 1041.3Q776.5 1038.8 775 1038.8Q773.5 1038.8 772 1041.3Z" stroke-width="0.9"/></g>
<g fill="none" stroke="#222" stroke-width="1"><path d="M806 1032V1041.5" stroke-width="1.4"/><path d="M800.5 1032.5H811.5" /><path d="M802 1033L800 1040.5H804Z M810 1033L808 1040.5H812Z" fill="#555" stroke-width="0.7"/><path d="M800 1041.8H812" stroke-width="1.2"/><path d="M800 1044H812" stroke-width="1.4"/></g>
</svg><div id="panel-left"></div>
<div id="title">Model definitions</div>
<div id="titleline"></div>
<div class="lbl" style="left:842px;top:42.5px">Model</div>
<div id="modelsel"><div class="lbl" style="left:11px;top:2.5px;font-size:12.1px">Flange</div>
<svg class="abs" style="left:185px;top:8px" width="8" height="6" viewBox="0 0 8 6"><path d="M0.3 0.3H7.3L3.8 5.6Z" fill="#5a5a5a"/></svg></div>
<div id="tolbtn">
<svg class="abs" style="left:1px;top:2px" width="20" height="20" viewBox="0 0 20 20"><g fill="none" stroke="#555" stroke-width="1"><rect x="0.7" y="1" width="9" height="6.7" fill="#3a3a3a" stroke="none"/><path d="M0.7 3.3H9.7M0.7 5.5H9.7M3.2 1V7.7M6.6 1V7.7" stroke="#eee" stroke-width="0.6"/><path d="M11.5 3.5L15 6.5L12.5 8"/><path d="M2.5 11.5L5.5 15L8 12.5"/><path d="M7.5 15.5L14 9" stroke-width="1.6" stroke="#444"/><path d="M6 17L7 13L10 16Z M15.5 7.5L11.5 8.5L14.5 11.5Z" fill="#444" stroke="none"/><path d="M15 12.5V16.5M13 14.5H17M13 18.5H17" stroke-width="1"/></g></svg>
<span>Select default tolerances...</span></div>
<svg class="abs" style="left:1462px;top:50px" width="20" height="9" viewBox="0 0 20 9"><circle cx="4" cy="4.5" r="1.6" fill="#222"/><circle cx="10.2" cy="4.5" r="1.6" fill="#222"/><circle cx="16.5" cy="4.5" r="1.6" fill="#222"/></svg>
<div id="toolbar"></div>
<svg class="abs" style="left:829px;top:72px" width="240" height="39" viewBox="0 0 240 39">
<g fill="none" stroke="#222" stroke-width="1.2" stroke-linecap="butt">
<!-- icon1: datum A box -->
<rect x="9.9" y="14.4" width="13.6" height="12.6" rx="0.8" fill="#fff" stroke="#3a3a3a" stroke-width="1.3"/><path d="M16.6 27V29.2" /><path d="M13.3 31.9H19.9L16.6 28.7Z" fill="#222" stroke="none"/>
<!-- icon2: dimension double arrow -->
<path d="M44.5 23.5L50 18" stroke-width="1.8"/><path d="M42 25.6L46 29.8M52.2 15.4L56 19.6" stroke-width="1"/><path d="M42.3 25.6L43.8 20.6L47.3 24.3Z M52.2 15.8L50.6 20.8L47.2 17.2Z" fill="#222" stroke="none"/>
<!-- icon3: feature control frame -->
<rect x="72.6" y="15.6" width="17.8" height="13" stroke-width="1.1"/><path d="M84.5 15.6V28.6" stroke-width="1"/><circle cx="78.5" cy="22.1" r="2.8" stroke-width="1"/><path d="M74.3 22.1H82.7M78.5 17.6V26.6" stroke-width="0.9"/><path d="M87.4 18V19.5M87.4 21.3V22.8M87.4 24.6V26.1" stroke-width="1.1"/>
<!-- icon4: surface finish / weld -->
<path d="M105.9 18.2L109.1 22.2L105.9 26.3" stroke-width="1"/><path d="M109.1 22.2H117.8L120.5 28.3" stroke-width="1"/><path d="M111.9 17.7L116 22.2H110.8Z" stroke-width="0.9"/><circle cx="120.7" cy="28.8" r="1.25" fill="#222" stroke="none"/>
<!-- separator -->
<path d="M130.7 10V35" stroke="#cfcfcf" stroke-width="1"/>
<!-- icon5 -->
<path d="M139.5 28.5L154 14" stroke="#2b62c4" stroke-width="1.2"/><path d="M147 22L155.5 30" stroke-width="1.7"/><circle cx="146.6" cy="21.6" r="1.7" fill="#222" stroke="none"/>
<!-- icon6 -->
<path d="M172.5 18L184 29.5" stroke-width="1.7"/><path d="M176.5 15.5L188 26.5" stroke="#2b62c4" stroke-width="1.1"/>
<!-- icon7 -->
<path d="M209.6 25.1L205.3 15.2L214.8 19.7" stroke-width="1.5" stroke-linejoin="miter"/><path d="M208.5 21.8L211.9 18.6" stroke-width="1.3"/><path d="M209.2 28.7L218.6 19.3" stroke-width="1.6"/><path d="M221 16.9L216.3 18L219.9 21.6Z" fill="#222" stroke="none"/>
</g>
<text x="16.5" y="25.3" font-family="Liberation Sans, sans-serif" font-weight="bold" font-size="10.5" text-anchor="middle" fill="#222">A</text>
</svg>
<div class="sec" style="top:118px;height:33px"><svg class="abs" style="left:5px;top:14px" width="11" height="8" viewBox="0 0 11 8"><path d="M1 1.5L5.5 6L10 1.5" fill="none" stroke="#222" stroke-width="1.5"/></svg><b style="top:8px">Datums</b><i style="left:72.5px;top:9.5px">(3/3)</i></div>
<div class="dat" style="top:150px">A</div><div class="dat" style="top:181px;height:30px">B</div><div class="dat" style="top:211px">C</div>
<div class="sec" style="top:247px;height:34px"><svg class="abs" style="left:5px;top:14px" width="11" height="8" viewBox="0 0 11 8"><path d="M1 1.5L5.5 6L10 1.5" fill="none" stroke="#222" stroke-width="1.5"/></svg><b style="top:7.5px">Characteristics</b><i style="left:121.5px;top:9.5px">(23/23)</i>
<svg class="abs" style="left:187px;top:6px" width="20" height="20" viewBox="0 0 20 20"><g fill="none" stroke="#333" stroke-width="1"><rect x="0.7" y="1" width="9" height="6.7" fill="#3a3a3a" stroke="none"/><path d="M0.7 3.3H9.7M0.7 5.5H9.7M3.2 1V7.7M6.6 1V7.7" stroke="#eee" stroke-width="0.6"/><path d="M11.5 3.5L15 6.5L12.5 8"/><path d="M2.5 11.5L5.5 15L8 12.5"/><path d="M7.5 15.5L14 9" stroke-width="1.6" stroke="#222"/><path d="M6 17L7 13L10 16Z M15.5 7.5L11.5 8.5L14.5 11.5Z" fill="#222" stroke="none"/><path d="M15 12.5V16.5M13 14.5H17M13 18.5H17" stroke-width="1"/></g></svg>
<div class="abs" style="left:218px;top:2px;width:27px;height:27px;background:#8fcbee;border-radius:3px"></div>
<svg class="abs" style="left:222px;top:6px" width="20" height="20" viewBox="0 0 20 20"><g fill="none" stroke="#222" stroke-width="1.1" stroke-linejoin="round"><path d="M11.4 1.4H14.4L17.7 5.1V17.5H5.8L2.4 13.5V9.6H8.6L11.4 6Z" fill="#fff"/><path d="M5.8 17.5V13.3L2.4 9.6M5.8 13.3H11.8V9.2L8.6 9.6M11.8 9.2L14.6 5.3H17.5M14.6 5.3L11.4 1.6" stroke-width="0.7" stroke="#777"/><path d="M2.1 1.9C5.5 1.7 7.6 3.6 8 7" stroke-width="1.3"/><path d="M8.4 9.6L4.9 6.1L11.4 6.3Z" fill="#222" stroke="none"/></g></svg>
</div>
<div class="tbl">
<div class="tr th"><div class="td h">Type</div><div class="td h">Nominal value</div><div class="td h">Tolerance</div><div class="td h">Upper limit</div><div class="td h">Lower limit</div></div>
<div class="tr"><div class="td h">Diameter</div><div class="td nv">5.000</div><div class="td">±0.020</div><div class="td">5.020</div><div class="td">4.980</div></div>
<div class="tr"><div class="td h">Diameter</div><div class="td nv">20.000</div><div class="td">±0.025</div><div class="td">20.025</div><div class="td">19.975</div></div>
<div class="tr"><div class="td h">Diameter</div><div class="td nv">42.000</div><div class="td">±0.500</div><div class="td">42.500</div><div class="td">41.500</div></div>
<div class="tr"><div class="td h">Diameter</div><div class="td nv">44.500</div><div class="td">±0.100</div><div class="td">44.600</div><div class="td">44.400</div></div>
<div class="tr"><div class="td h">Diameter</div><div class="td nv">31.000</div><div class="td">+0.100/-0.100</div><div class="td">31.100</div><div class="td">30.900</div></div>
<div class="tr"><div class="td h">Distance</div><div class="td nv">9.500</div><div class="td">±0.100</div><div class="td">9.600</div><div class="td">9.400</div></div>
<div class="tr"><div class="td h">Diameter</div><div class="td nv">36.000</div><div class="td">±0.250</div><div class="td">36.250</div><div class="td">35.750</div></div>
<div class="tr"><div class="td h">Distance</div><div class="td nv">25.500</div><div class="td">+0.100/-0.100</div><div class="td">25.600</div><div class="td">25.400</div></div>
<div class="tr"><div class="td h">Distance</div><div class="td nv">35.500</div><div class="td">±0.020</div><div class="td">35.520</div><div class="td">35.480</div></div>
<div class="tr"><div class="td h">Angle</div><div class="td nv">45.000</div><div class="td">--</div><div class="td">--</div><div class="td">--</div></div>
<div class="tr"><div class="td h">Distance</div><div class="td nv">41.000</div><div class="td">±0.050</div><div class="td">41.050</div><div class="td">40.950</div></div>
<div class="tr"><div class="td h">Distance</div><div class="td nv">1.000</div><div class="td">--</div><div class="td">--</div><div class="td">--</div></div>
<div class="tr"><div class="td h">Radius</div><div class="td nv">1.000</div><div class="td">--</div><div class="td">--</div><div class="td">--</div></div>
<div class="tr"><div class="td h">Diameter</div><div class="td nv">56.000</div><div class="td">±0.200</div><div class="td">56.200</div><div class="td">55.800</div></div>
<div class="tr"><div class="td h">Radius</div><div class="td nv">0.500</div><div class="td">--</div><div class="td">--</div><div class="td">--</div></div>
<div class="tr"><div class="td h">Radius</div><div class="td nv">1.000</div><div class="td">--</div><div class="td">--</div><div class="td">--</div></div>
<div class="tr"><div class="td h">Geometric toleran...</div><div class="td nv"><svg class="gs" width="13" height="12" viewBox="0 0 13 12"><circle cx="6.5" cy="6" r="3.6" fill="none" stroke="#222" stroke-width="1"/><path d="M0.5 6H12.5M6.5 0.5V11.5" stroke="#222" stroke-width="1"/></svg>0.100AB</div><div class="td">N/A</div><div class="td">N/A</div><div class="td">N/A</div></div>
<div class="tr"><div class="td h">Geometric toleran...</div><div class="td nv"><svg class="gs" width="14" height="13" viewBox="0 0 14 13"><path d="M1 12.5L9.5 3.5" stroke="#222" stroke-width="1.2"/><path d="M13.5 0L12 6.8L7 2.2Z" fill="#222"/></svg>0.100B</div><div class="td">N/A</div><div class="td">N/A</div><div class="td">N/A</div></div>
<div class="tr"><div class="td h">Geometric toleran...</div><div class="td nv"><svg class="gs" width="18" height="13" viewBox="0 0 18 13"><path d="M0.5 12H17M8.8 0.5V12" stroke="#222" stroke-width="1" fill="none"/></svg>0.080A</div><div class="td">N/A</div><div class="td">N/A</div><div class="td">N/A</div></div>
<div class="tr"><div class="td h">Geometric toleran...</div><div class="td nv"><svg class="gs" width="17" height="10" viewBox="0 0 17 10"><path d="M4.5 0.8H16L12 8.8H0.8Z" stroke="#222" stroke-width="1" fill="none"/></svg>0.100</div><div class="td">N/A</div><div class="td">N/A</div><div class="td">N/A</div></div>
<div class="tr"><div class="td h">Geometric toleran...</div><div class="td nv"><svg class="gs" width="9" height="12" viewBox="0 0 9 12"><path d="M0.5 11L5.5 0.5M3.5 11L8.5 0.5" stroke="#555" stroke-width="0.9" fill="none"/></svg>0.060A</div><div class="td">N/A</div><div class="td">N/A</div><div class="td">N/A</div></div>
<div class="tr"><div class="td h">Geometric toleran...</div><div class="td nv"><svg class="gs" width="14" height="13" viewBox="0 0 14 13"><path d="M1 12.5L9.5 3.5" stroke="#222" stroke-width="1.2"/><path d="M13.5 0L12 6.8L7 2.2Z" fill="#222"/></svg>0.100AC</div><div class="td">N/A</div><div class="td">N/A</div><div class="td">N/A</div></div>
<div class="tr"><div class="td h">Geometric toleran...</div><div class="td nv">8X<svg class="gs" width="13" height="12" viewBox="0 0 13 12"><circle cx="6.5" cy="6" r="3.6" fill="none" stroke="#222" stroke-width="1"/><path d="M0.5 6H12.5M6.5 0.5V11.5" stroke="#222" stroke-width="1"/></svg>0.140AC</div><div class="td">N/A</div><div class="td">N/A</div><div class="td">N/A</div></div>
</div><div id="footer"></div><div class="abs" style="left:1460px;top:1013.5px;width:40px;height:1px;background:#d9d9d9"></div>
<svg class="abs" style="left:1479px;top:1025px" width="13" height="13" viewBox="0 0 13 13"><circle cx="6.5" cy="6.5" r="5.6" fill="#9b9b9b"/><text x="6.5" y="10" font-family="Liberation Sans, sans-serif" font-weight="bold" font-size="9.5" text-anchor="middle" fill="#eee">?</text></svg>
<div id="sbar"></div><div id="sthumb"></div>
<svg class="abs" style="left:1490px;top:120px" width="8" height="8" viewBox="0 0 8 8"><path d="M0.3 7L4.3 1.5L8 7Z" fill="#8a8a8a"/></svg>
<svg class="abs" style="left:1489px;top:1003px" width="8" height="8" viewBox="0 0 8 8"><path d="M0 1.5H8L4 7Z" fill="#8a8a8a"/></svg>
<div id="redbox"></div>
</div></body></html>
